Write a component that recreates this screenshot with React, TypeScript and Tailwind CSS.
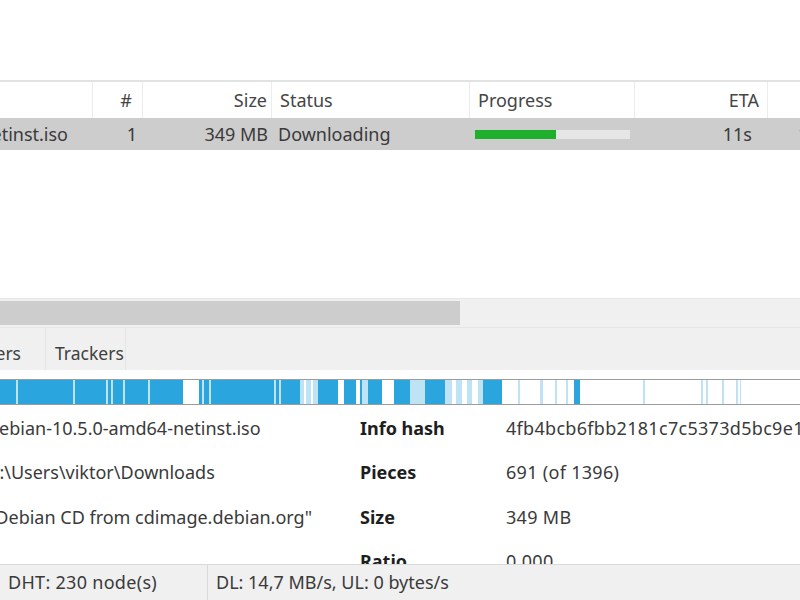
import React from 'react'

// piece map: [x, width, colour]
const D = '#2aa5dd'
const L = '#bde3f5'
const W = '#ffffff'
const pieces: [number, number, string][] = [
  [0, 580, D],
  [16, 2, L], [73, 2, L], [106, 2, L], [111, 2, L], [123, 2, L], [148, 2, L],
  [183, 16, W], [202, 2, L], [209, 2, L],
  [274, 2, L], [279, 2, L], [300, 18, L], [304, 2, W], [311, 2, W],
  [338, 6, W], [356, 4, W], [362, 6, L], [382, 12, W], [410, 15, L],
  [445, 38, L], [452, 4, W], [462, 5, W], [472, 6, W],
  [502, 72, W], [518, 2, L], [540, 3, L], [555, 2, L], [566, 2, L],
  [580, 220, W],
  [643, 2, L], [701, 2, L], [706, 2, L], [722, 2, L], [736, 2, L], [740, 1, L],
]

function PieceBar() {
  return (
    <svg width="800" height="24" className="block">
      {pieces.map(([x, w, c], i) => (
        <rect key={i} x={x} y={0} width={w} height={24} fill={c} />
      ))}
    </svg>
  )
}

const info: [string, string, string][] = [
  ['debian-10.5.0-amd64-netinst.iso', 'Info hash', '4fb4bcb6fbb2181c7c5373d5bc9e1c4a9a3d8e2f'],
  ['C:\\Users\\viktor\\Downloads', 'Pieces', '691 (of 1396)'],
  ['"Debian CD from cdimage.debian.org"', 'Size', '349 MB'],
  ['-', 'Ratio', '0.000'],
]

export default function App() {
  return (
    <div
      className="w-[800px] h-[600px] overflow-hidden bg-white text-[18px] text-[#3a3a3a] flex flex-col"
      style={{ fontFamily: '"Noto Sans", "Open Sans", sans-serif' }}
    >
      <div className="h-[80px] shrink-0" />

      {/* torrent list header */}
      <div className="h-[38px] shrink-0 flex items-center border-t-2 border-[#e2e2e2] text-[#454545] whitespace-nowrap">
        <div className="w-[93px] h-full border-r border-[#ececec]" />
        <div className="w-[50px] h-full flex items-center justify-end pr-[10px] border-r border-[#ececec]">#</div>
        <div className="w-[129px] h-full flex items-center justify-end pr-[4px] border-r border-[#ececec]">Size</div>
        <div className="w-[198px] h-full flex items-center pl-[8px] border-r border-[#ececec]">Status</div>
        <div className="w-[165px] h-full flex items-center pl-[8px] border-r border-[#ececec]">Progress</div>
        <div className="w-[133px] h-full flex items-center justify-end pr-[8px] border-r border-[#ececec]">ETA</div>
        <div className="flex-1" />
      </div>

      {/* selected row */}
      <div className="h-[32px] shrink-0 flex items-center bg-[#cdcdcd] whitespace-nowrap">
        <div className="w-[93px] flex justify-end pr-[25px] overflow-hidden">
          <span>debian-10.5.0-amd64-netinst.iso</span>
        </div>
        <div className="w-[50px] text-right pr-[6px]">1</div>
        <div className="w-[129px] text-right pr-[4px]">349 MB</div>
        <div className="w-[198px] pl-[6px]">Downloading</div>
        <div className="w-[165px] pl-[5px] flex items-center">
          <div className="w-[155px] h-[9px] bg-[#e6e6e6] flex">
            <div className="w-[81px] h-full bg-[#1fb02b]" />
          </div>
        </div>
        <div className="w-[133px] text-right pr-[16px]">11s</div>
        <div className="flex-1 overflow-hidden pl-[30px]">1</div>
      </div>

      <div className="h-[148px] shrink-0" />

      {/* horizontal scrollbar */}
      <div className="h-[30px] shrink-0 bg-[#f0f0f0] border-t border-[#e6e6e6] border-b border-[#d9d9d9] flex items-center">
        <div className="w-[460px] h-[24px] bg-[#cdcdcd]" />
      </div>

      {/* tabs */}
      <div className="h-[42px] shrink-0 bg-[#f0f0f0] flex items-stretch text-[17.5px] text-[#404040] whitespace-nowrap">
        <div className="w-[46px] flex items-center justify-end pt-[8px] pr-[24px] border-r border-[#e4e4e4] overflow-hidden">
          <span>Peers</span>
        </div>
        <div className="w-[80px] flex items-center pt-[8px] pl-[9px] border-r border-[#e4e4e4]">Trackers</div>
        <div className="flex-1" />
      </div>

      <div className="h-[9px] shrink-0" />

      {/* piece map */}
      <div className="shrink-0 border-y border-[#9c9c9c]">
        <PieceBar />
      </div>

      {/* general info */}
      <div className="flex-1 overflow-hidden pt-[1px] whitespace-nowrap">
        {info.map(([v, k, kv]) => (
          <div key={k} className="h-[44.5px] flex items-center">
            <div className="w-[360px] -ml-[12px] shrink-0">{v}</div>
            <div className="w-[158px] shrink-0 pl-[12px] font-bold text-[#1e1e1e]">{k}</div>
            <div className="tracking-[0.3px]">{kv}</div>
          </div>
        ))}
      </div>

      {/* status bar */}
      <div className="h-[36px] shrink-0 bg-[#f0f0f0] border-t border-[#dadada] flex items-center whitespace-nowrap">
        <div className="w-[208px] h-full flex items-center pl-[8px] border-r border-[#dadada] tracking-[0.3px]">DHT: 230 node(s)</div>
        <div className="pl-[8px]">DL: 14,7 MB/s, UL: 0 bytes/s</div>
      </div>
    </div>
  )
}
